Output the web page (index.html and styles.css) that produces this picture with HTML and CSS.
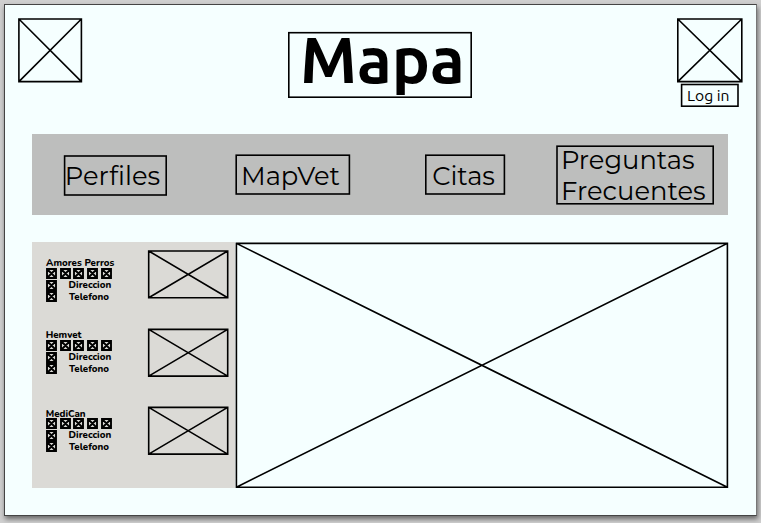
FILE: index.html
```html
<!DOCTYPE html>
<html lang="es">
<head>
<meta charset="utf-8">
<title>Mapa</title>
<link rel="stylesheet" href="styles.css">
</head>
<body>
<svg class="defs" width="0" height="0">
  <symbol id="cross" viewBox="0 0 100 100" preserveAspectRatio="none" overflow="visible">
    <path d="M0 0H100V100H0ZL100 100M100 0L0 100" vector-effect="non-scaling-stroke"/>
  </symbol>
</svg>
<main class="page">
  <header class="top">
    <svg class="logo"><use href="#cross" x="0.9" y="1" width="62.5" height="62.6"/></svg>
    <h1 class="title"><svg><rect x="0.8" y="0.7" width="182.4" height="64.5"/><text x="12" y="51">Mapa</text></svg></h1>
    <div class="account">
      <svg class="avatar"><use href="#cross" x="0.8" y="1" width="64" height="62.6"/></svg>
      <a class="login"><svg><rect x="0.6" y="0.5" width="56.4" height="21.7"/><text x="6" y="16.7">Log in</text></svg></a>
    </div>
  </header>
  <nav class="nav">
    <a class="link perfiles"><svg><rect x="0.6" y="1" width="101.6" height="39"/><text x="0.8" y="30.2">Perfiles</text></svg></a>
    <a class="link mapvet"><svg><rect x="1.2" y="1.2" width="113.2" height="38.8"/><text x="6" y="31.2">MapVet</text></svg></a>
    <a class="link citas"><svg><rect x="0.8" y="1.2" width="78.6" height="38.8"/><text x="7.2" y="31.2">Citas</text></svg></a>
    <a class="link preguntas"><svg><rect x="1" y="1.2" width="156.2" height="57.6"/><text x="4.9" y="23.8">Preguntas</text><text x="4.9" y="55.2">Frecuentes</text></svg></a>
  </nav>
  <section class="content">
    <div class="list">
      <article class="vet first">
        <div class="info">
          <svg class="name"><text x="0.1" y="8">Amores Perros</text></svg>
          <div class="stars"><svg class="icon"><use href="#cross"/></svg><svg class="icon"><use href="#cross"/></svg><svg class="icon"><use href="#cross"/></svg><svg class="icon"><use href="#cross"/></svg><svg class="icon"><use href="#cross"/></svg></div>
          <div class="row"><svg class="icon"><use href="#cross"/></svg><svg class="label"><text x="-0.4" y="8">Direccion</text></svg></div>
          <div class="row"><svg class="icon"><use href="#cross"/></svg><svg class="label"><text x="0" y="8.7">Telefono</text></svg></div>
        </div>
        <svg class="photo"><use href="#cross" x="0.7" y="1" width="79" height="46.7"/></svg>
      </article>
      <article class="vet second">
        <div class="info">
          <svg class="name"><text x="-0.3" y="8">Hemvet</text></svg>
          <div class="stars"><svg class="icon"><use href="#cross"/></svg><svg class="icon"><use href="#cross"/></svg><svg class="icon"><use href="#cross"/></svg><svg class="icon"><use href="#cross"/></svg><svg class="icon"><use href="#cross"/></svg></div>
          <div class="row"><svg class="icon"><use href="#cross"/></svg><svg class="label"><text x="-0.4" y="8">Direccion</text></svg></div>
          <div class="row"><svg class="icon"><use href="#cross"/></svg><svg class="label"><text x="0" y="8.7">Telefono</text></svg></div>
        </div>
        <svg class="photo"><use href="#cross" x="0.7" y="1.4" width="79" height="46.7"/></svg>
      </article>
      <article class="vet third">
        <div class="info">
          <svg class="name"><text x="-0.3" y="8">MediCan</text></svg>
          <div class="stars"><svg class="icon"><use href="#cross"/></svg><svg class="icon"><use href="#cross"/></svg><svg class="icon"><use href="#cross"/></svg><svg class="icon"><use href="#cross"/></svg><svg class="icon"><use href="#cross"/></svg></div>
          <div class="row"><svg class="icon"><use href="#cross"/></svg><svg class="label"><text x="-0.4" y="8">Direccion</text></svg></div>
          <div class="row"><svg class="icon"><use href="#cross"/></svg><svg class="label"><text x="0" y="8.7">Telefono</text></svg></div>
        </div>
        <svg class="photo"><use href="#cross" x="0.7" y="1.4" width="79" height="46.7"/></svg>
      </article>
    </div>
    <svg class="map"><use href="#cross" x="1.4" y="1.4" width="491" height="243.8"/></svg>
  </section>
</main>
</body>
</html>
```
FILE: styles.css
```css
* { box-sizing: border-box; }
body {
  margin: 0;
  height: 523px;
  padding: 4px;
  background: #d0d0d0;
  overflow: hidden;
}
.defs { display: none; }
svg {
  display: block;
  flex: none;
  overflow: visible;
  fill: none;
  stroke: #000;
  stroke-width: 1.6px;
}
text { fill: #000; stroke: none; }
.page {
  width: 753px;
  height: 512px;
  padding: 13px 13px 0;
  background: #f5ffff;
  border: 1px solid #444;
  border-right-color: #777;
  box-shadow: 1px 3px 5px rgba(0, 0, 0, .5);
}
.top {
  display: flex;
  justify-content: space-between;
  align-items: flex-start;
  height: 116px;
}
.logo { width: 64px; height: 64px; }
.title {
  width: 184px;
  height: 66px;
  margin: 14px 0 0;
  font: 700 64px "Ubuntu", "Noto Sans", sans-serif;
}
.title svg, .login svg, .link svg { width: 100%; height: 100%; }
.account { width: 66px; }
.avatar { width: 66px; height: 64px; }
.login {
  display: block;
  width: 58px;
  height: 23px;
  margin: 2px 0 0 4px;
  font: 400 15.7px "Ubuntu", "Noto Sans", sans-serif;
}
.nav {
  display: flex;
  align-items: flex-start;
  width: 696px;
  height: 81px;
  margin-left: 14px;
  background: #bdbebd;
  font: 400 25.8px "Montserrat", Inter, sans-serif;
}
.link { display: block; flex: none; }
.perfiles { width: 103px; height: 41px; margin: 21px 0 0 32px; }
.mapvet { width: 115px; height: 41px; margin: 20px 0 0 68px; }
.citas { width: 80px; height: 41px; margin: 20px 0 0 75px; }
.preguntas { width: 158px; height: 60px; margin: 11px 0 0 51px; }
.content { display: flex; width: 696px; height: 246px; margin: 27px 0 0 14px; }
.list { width: 203px; height: 246px; padding-top: 8px; background: #dbdad6; flex: none; }
.vet { display: flex; align-items: flex-start; height: 78px; padding-left: 14px; }
.info { width: 102px; padding-top: 8px; font: 800 9.7px "Nunito", "Open Sans", sans-serif; }
.second .info { padding-top: 2.2px; }
.third .info { padding-top: 2.6px; }
.photo { width: 80px; height: 48px; }
.name { width: 70px; height: 9.5px; }
.stars { display: flex; gap: 2.7px; height: 12px; }
.icon { width: 11px; height: 11px; padding: 1px; stroke-width: 1.9px; }
.icon use { stroke-width: 1.9px; }
.row { display: flex; height: 11.3px; }
.label { width: 44px; height: 11px; margin-left: 12px; }
.map { width: 493px; height: 247px; }
```
